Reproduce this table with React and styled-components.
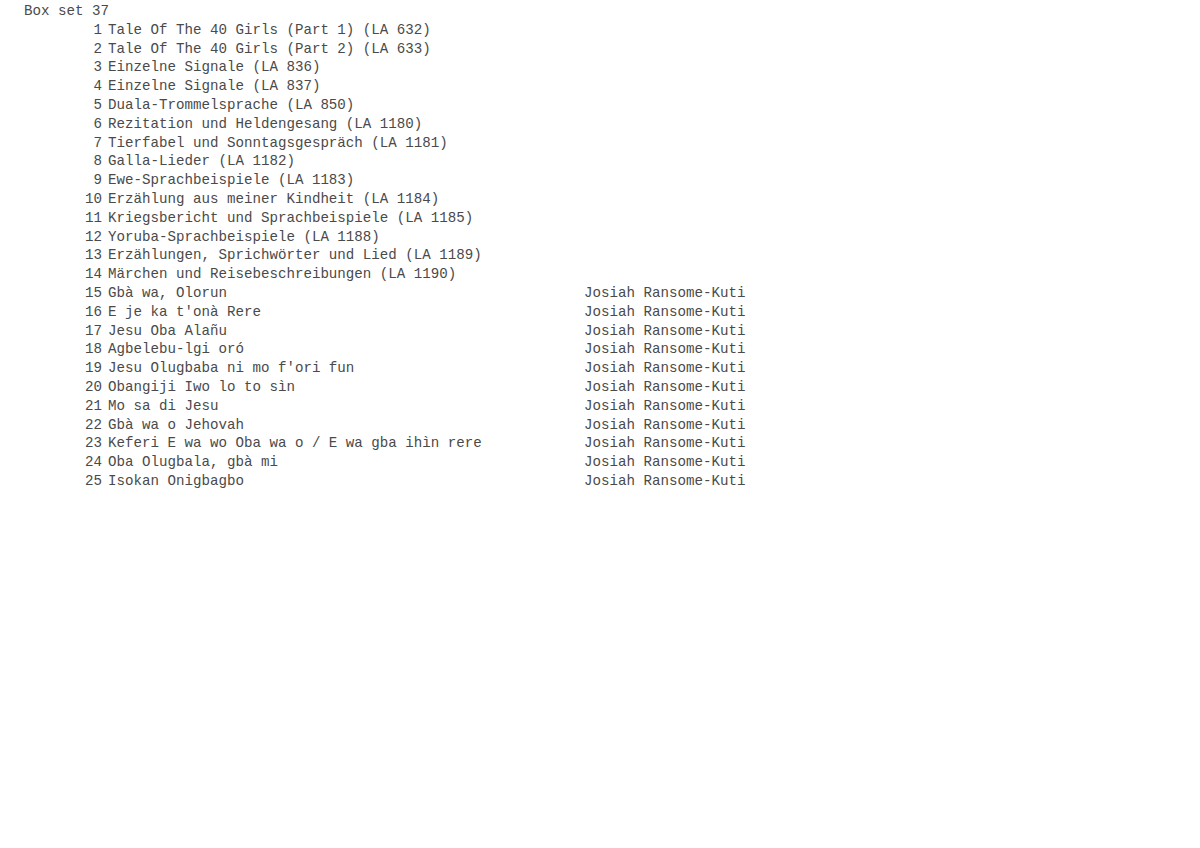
import React from "react";
import styled, { createGlobalStyle } from "styled-components";

const tracks = [
    { n: 1, title: "Tale Of The 40 Girls (Part 1) (LA 632)" },
    { n: 2, title: "Tale Of The 40 Girls (Part 2) (LA 633)" },
    { n: 3, title: "Einzelne Signale (LA 836)" },
    { n: 4, title: "Einzelne Signale (LA 837)" },
    { n: 5, title: "Duala-Trommelsprache (LA 850)" },
    { n: 6, title: "Rezitation und Heldengesang (LA 1180)" },
    { n: 7, title: "Tierfabel und Sonntagsgespräch (LA 1181)" },
    { n: 8, title: "Galla-Lieder (LA 1182)" },
    { n: 9, title: "Ewe-Sprachbeispiele (LA 1183)" },
    { n: 10, title: "Erzählung aus meiner Kindheit (LA 1184)" },
    { n: 11, title: "Kriegsbericht und Sprachbeispiele (LA 1185)" },
    { n: 12, title: "Yoruba-Sprachbeispiele (LA 1188)" },
    { n: 13, title: "Erzählungen, Sprichwörter und Lied (LA 1189)" },
    { n: 14, title: "Märchen und Reisebeschreibungen (LA 1190)" },
    { n: 15, title: "Gbà wa, Olorun", artist: "Josiah Ransome-Kuti" },
    { n: 16, title: "E je ka t'onà Rere", artist: "Josiah Ransome-Kuti" },
    { n: 17, title: "Jesu Oba Alañu", artist: "Josiah Ransome-Kuti" },
    { n: 18, title: "Agbelebu-lgi oró", artist: "Josiah Ransome-Kuti" },
    { n: 19, title: "Jesu Olugbaba ni mo f'ori fun", artist: "Josiah Ransome-Kuti" },
    { n: 20, title: "Obangiji Iwo lo to sìn", artist: "Josiah Ransome-Kuti" },
    { n: 21, title: "Mo sa di Jesu", artist: "Josiah Ransome-Kuti" },
    { n: 22, title: "Gbà wa o Jehovah", artist: "Josiah Ransome-Kuti" },
    { n: 23, title: "Keferi E wa wo Oba wa o / E wa gba ihìn rere", artist: "Josiah Ransome-Kuti" },
    { n: 24, title: "Oba Olugbala, gbà mi", artist: "Josiah Ransome-Kuti" },
    { n: 25, title: "Isokan Onigbagbo", artist: "Josiah Ransome-Kuti" },
];

function App() {
    return (
        <>
            <GlobalStyle />
            <Page>
                <BoxTitle>Box set 37</BoxTitle>
                <TrackList>
                    {tracks.map((t) => (
                        <TrackRow key={t.n}>
                            <TrackNumber>{t.n}</TrackNumber>
                            <TrackTitle>{t.title}</TrackTitle>
                            <TrackArtist>{t.artist || ""}</TrackArtist>
                        </TrackRow>
                    ))}
                </TrackList>
            </Page>
        </>
    );
}

export default App;

const GlobalStyle = createGlobalStyle`
    body {
        margin: 0;
        background: #ffffff;
    }
`;

const Page = styled.div`
    padding: 2px 0 0 24px;
    font-family: "Liberation Mono", "Courier New", monospace;
    font-size: 14.17px;
    line-height: 18.8px;
    color: #4a4a4a;
    white-space: pre;
`;

const BoxTitle = styled.div``;

const TrackList = styled.div`
    display: flex;
    flex-direction: column;
`;

const TrackRow = styled.div`
    display: grid;
    grid-template-columns: 84px 476px auto;
`;

const TrackNumber = styled.span`
    text-align: right;
    padding-right: 6px;
`;

const TrackTitle = styled.span``;

const TrackArtist = styled.span``;
